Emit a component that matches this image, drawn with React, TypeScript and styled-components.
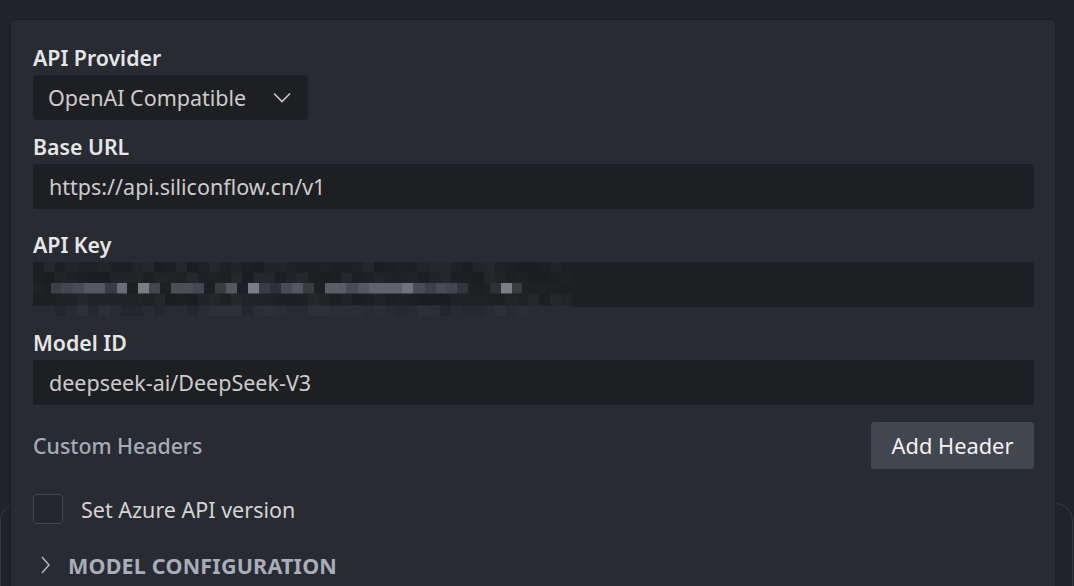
import React from "react";
import styled, { createGlobalStyle } from "styled-components";

const Global = createGlobalStyle`
  html, body { margin: 0; padding: 0; background: #212328; }
  body { font-family: "Noto Sans", "Open Sans", sans-serif; }
  * { box-sizing: border-box; }
`;

const Page = styled.div`
  position: relative;
  width: 1074px;
  height: 586px;
  overflow: hidden;
  background: #212328;
  padding: 19px 18px 0 10px;
`;

const BackShape = styled.div`
  position: absolute;
  left: 0;
  top: 503px;
  width: 1073px;
  height: 200px;
  border: 1px solid #363940;
  border-radius: 18px;
  z-index: 0;
`;

const Panel = styled.section`
  position: relative;
  z-index: 1;
  height: 620px;
  background: #282b32;
  border: 1px solid #1b1d21;
  border-radius: 4px;
  padding: 25px 21px 0 22px;
  display: flex;
  flex-direction: column;
`;

const Field = styled.div<{ $mt: number }>`
  display: flex;
  flex-direction: column;
  gap: 4px;
  margin-top: ${(p) => p.$mt}px;
`;

const Label = styled.label`
  font-size: 21.3px;
  line-height: 26px;
  font-weight: 600;
  color: #e6e6e6;
`;

const Select = styled.div`
  width: 275px;
  height: 45px;
  background: #1e1f23;
  border-radius: 4px;
  display: flex;
  align-items: center;
  justify-content: space-between;
  padding: 0 17px 0 15px;
  font-size: 21.5px;
  color: #cccccc;
`;

const InputWrap = styled.div`
  position: relative;
  height: 45px;
`;

const Input = styled.div`
  height: 45px;
  background: #1e1f23;
  border-radius: 3px;
  display: flex;
  align-items: center;
  padding: 0 16px;
  font-size: 21.5px;
  color: #cccccc;
`;

const Mosaic = styled.svg`
  position: absolute;
  left: -3px;
  top: 0;
`;

const HeaderRow = styled.div`
  margin-top: 17px;
  display: flex;
  align-items: center;
  justify-content: space-between;
`;

const Muted = styled.span`
  font-size: 21.3px;
  color: #a6abb7;
  font-weight: 500;
`;

const Button = styled.button`
  width: 163px;
  height: 47px;
  border: none;
  border-radius: 3px;
  background: #42464f;
  color: #f3f3f3;
  font-family: inherit;
  font-size: 21.8px;
  padding: 0;
  text-align: center;
`;

const CheckRow = styled.label`
  margin-top: 25px;
  display: flex;
  align-items: center;
  gap: 18px;
  font-size: 21.5px;
  color: #d4d4d4;
`;

const Box = styled.span`
  width: 30px;
  height: 30px;
  border: 1px solid #43474f;
  border-radius: 4px;
  background: #23262c;
`;

const Section = styled.div`
  margin-top: 28px;
  display: flex;
  align-items: center;
  gap: 18px;
  padding-left: 8px;
  height: 26px;
`;

const SectionTitle = styled.span`
  font-size: 21.5px;
  font-weight: 700;
  color: #a8adba;
  letter-spacing: 0.2px;
`;

const bright: [number, number, string][] = [
  [51, 61, "#3e4048"], [61, 73, "#45474e"], [73, 84, "#4a4c53"], [84, 105, "#55585f"],
  [105, 117, "#3a3c42"], [117, 127, "#6a6d74"], [138, 149, "#7a7d84"], [149, 160, "#44464c"],
  [171, 193, "#4c4f56"], [193, 204, "#44474d"], [215, 226, "#3a3c42"], [226, 237, "#55585f"],
  [248, 259, "#7a7d84"], [259, 270, "#3a3c42"], [270, 281, "#2e3035"], [281, 292, "#4a4c53"],
  [292, 303, "#55585f"], [303, 314, "#3a3c42"], [325, 346, "#5a5d64"], [346, 358, "#4a4c53"],
  [358, 369, "#55585f"], [369, 402, "#60636a"], [402, 413, "#70737a"], [413, 425, "#4a4c53"],
  [425, 436, "#3e4046"], [436, 446, "#4a4c53"], [446, 457, "#44464c"], [457, 468, "#33353a"],
  [490, 501, "#2e3035"], [501, 512, "#7a7d84"], [512, 522, "#3a3c42"],
];

const darkShades = ["#1e1f23", "#1e1f23", "#202125", "#222428", "#1c1d21", "#25272b"];
const lowShades = ["#282b32", "#2b2e35", "#25282e", "#282b32", "#2d3037", "#23262c"];

function hash(a: number, b: number) {
  const v = Math.sin(a * 12.9898 + b * 78.233) * 43758.5453;
  return v - Math.floor(v);
}

const MosaicKey: React.FC = () => {
  const cells: React.ReactNode[] = [];
  const cw = 11;
  const rows = [
    { y: 0, h: 10.5 },
    { y: 10.5, h: 10.5 },
    { y: 31.5, h: 12 },
  ];
  for (let c = 0; c < 49; c++) {
    rows.forEach((r, ri) => {
      const col = darkShades[Math.floor(hash(c, ri) * darkShades.length)];
      cells.push(<rect key={`d${c}-${ri}`} x={3 + c * cw} y={r.y} width={cw} height={r.h} fill={col} />);
    });
    cells.push(
      <rect key={`m${c}`} x={3 + c * cw} y={21} width={cw} height={10.5} fill={darkShades[Math.floor(hash(c, 9) * 3)]} />
    );
    cells.push(
      <rect key={`l${c}`} x={3 + c * cw} y={43.5} width={cw} height={10.5} fill={lowShades[Math.floor(hash(c, 7) * lowShades.length)]} />
    );
  }
  bright.forEach(([x0, x1, col], i) =>
    cells.push(<rect key={`b${i}`} x={x0 - 30} y={21} width={x1 - x0} height={10.5} fill={col} />)
  );
  return (
    <Mosaic width="542" height="54" viewBox="0 0 542 54" aria-hidden>
      {cells}
    </Mosaic>
  );
};

export default function App() {
  return (
    <>
      <Global />
      <Page>
        <BackShape />
        <Panel>
          <Field $mt={0}>
            <Label>API Provider</Label>
            <Select>
              <span>OpenAI Compatible</span>
              <svg width="18" height="11" viewBox="0 0 18 11" fill="none">
                <polyline points="1,1.5 9,9.5 17,1.5" stroke="#c8c8c8" strokeWidth="1.6" />
              </svg>
            </Select>
          </Field>
          <Field $mt={14}>
            <Label>Base URL</Label>
            <Input>https://api.siliconflow.cn/v1</Input>
          </Field>
          <Field $mt={23}>
            <Label>API Key</Label>
            <InputWrap>
              <Input />
              <MosaicKey />
            </InputWrap>
          </Field>
          <Field $mt={23}>
            <Label>Model ID</Label>
            <Input>deepseek-ai/DeepSeek-V3</Input>
          </Field>
          <HeaderRow>
            <Muted>Custom Headers</Muted>
            <Button>Add Header</Button>
          </HeaderRow>
          <CheckRow>
            <Box />
            <span>Set Azure API version</span>
          </CheckRow>
          <Section>
            <svg width="9" height="18" viewBox="0 0 9 18" fill="none">
              <polyline points="1,1 8,9 1,17" stroke="#b0b4bf" strokeWidth="1.5" />
            </svg>
            <SectionTitle>MODEL CONFIGURATION</SectionTitle>
          </Section>
        </Panel>
      </Page>
    </>
  );
}
